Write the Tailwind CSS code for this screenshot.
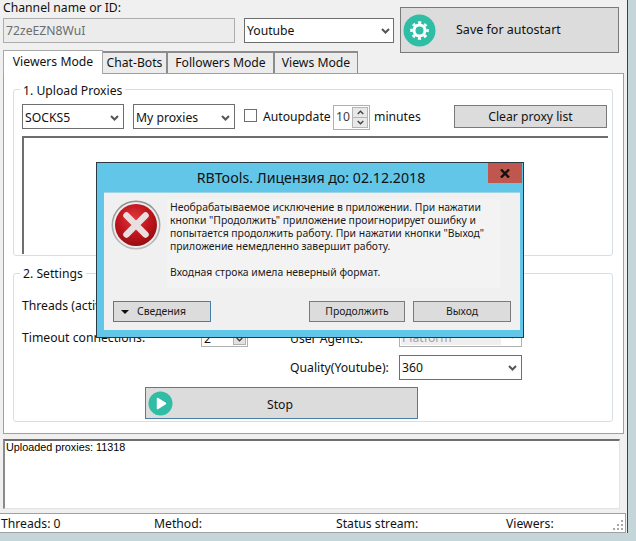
<!DOCTYPE html>
<html lang="en">
<head>
  <meta charset="UTF-8" />
  <title>RBTools</title>
  <script src="https://cdn.jsdelivr.net/npm/@tailwindcss/browser@4"></script>
</head>
<body class="relative w-[636px] h-[541px] overflow-hidden bg-[#c5d6db] font-['Noto_Sans',sans-serif] text-[12.2px] leading-[18px] text-[#111]">
  <!-- Main window -->
  <div class="w-[628px] h-[533px] bg-[#f0f0f0] border-r border-[#3c4347] flex flex-col">
    <!-- Header -->
    <div class="h-[73px] flex">
      <div class="w-[400px] pl-[3px] flex flex-col">
        <div class="h-[18px] leading-[15px] whitespace-nowrap">Channel name or ID:</div>
        <div class="flex gap-[9px]">
          <div class="w-[232px] h-[25px] border border-[#adadad] bg-[#ececec] text-[#6d6d6d] pl-[2px] pt-[1px] flex items-center">72zeEZN8WuI</div>
          <div class="w-[150px] h-[25px] border border-[#6e6e6e] bg-white pl-[2px] pt-[1px] flex items-center justify-between pr-[3px]">
            Youtube
            <svg width="9" height="6" viewBox="0 0 9 6" fill="none" stroke="#555" stroke-width="2"><path d="M1 1l3.5 3.5L8 1" /></svg>
          </div>
        </div>
        <!-- Tabs -->
        <div class="mt-auto flex items-end">
          <div class="w-[100px] h-[24px] bg-white border border-b-0 border-[#a8a8a8] text-center pt-[2px] relative z-10 -mb-px">Viewers Mode</div>
          <div class="w-[65px] h-[22px] bg-[#ececec] border-2 border-b-0 border-l-0 border-[#8c8c8c] text-center pt-[1px]">Chat-Bots</div>
          <div class="w-[107px] h-[22px] bg-[#ececec] border-2 border-b-0 border-l-0 border-[#8c8c8c] text-center pt-[1px]">Followers Mode</div>
          <div class="w-[83px] h-[22px] bg-[#ececec] border-t-2 border-r border-[#8c8c8c] text-center pt-[1px]">Views Mode</div>
        </div>
      </div>
      <div class="w-[219px] h-[46px] mt-[7px] bg-[#dcdcdc] border border-[#7a7a7a] flex items-center pl-[2px]">
        <svg width="33" height="33" viewBox="0 0 33 33">
          <circle cx="16.5" cy="16.5" r="16" fill="#2fbda5" />
          <circle cx="16.5" cy="16.5" r="5.5" fill="none" stroke="#fff" stroke-width="3" />
          <circle cx="16.5" cy="16.5" r="8" fill="none" stroke="#fff" stroke-width="2.6" stroke-dasharray="3.1 3.18" stroke-dashoffset="1.55" />
        </svg>
        <span class="ml-[20px] text-[12.5px]">Save for autostart</span>
      </div>
    </div>

    <!-- Tab panel -->
    <div class="ml-[3px] w-[621px] h-[361px] bg-white border border-[#a0a0a0] px-[9px] pt-[6px]">
      <fieldset class="w-[600px] h-[176px] border border-[#d5dfe5] rounded-[3px] pl-[8px]">
        <legend class="-ml-[2px] px-[3px] h-[18px] leading-[21px]">1. Upload Proxies</legend>
        <div class="flex items-start mt-[6px]">
          <div class="w-[102px] h-[25px] border border-[#6e6e6e] pl-[2px] pt-[2px] flex items-center justify-between pr-[4px]">
            SOCKS5
            <svg width="9" height="6" viewBox="0 0 9 6" fill="none" stroke="#555" stroke-width="2"><path d="M1 1l3.5 3.5L8 1" /></svg>
          </div>
          <div class="w-[102px] h-[25px] ml-[9px] border border-[#6e6e6e] pl-[2px] pt-[2px] flex items-center justify-between pr-[4px]">
            My proxies
            <svg width="9" height="6" viewBox="0 0 9 6" fill="none" stroke="#555" stroke-width="2"><path d="M1 1l3.5 3.5L8 1" /></svg>
          </div>
          <div class="w-[13px] h-[13px] ml-[9px] mt-[5px] border border-[#6e6e6e]"></div>
          <div class="ml-[6px] w-[70px] h-[25px] pt-[1px] flex items-center">Autoupdate</div>
          <div class="w-[37px] h-[25px] mt-[1px] border border-[#b0b0b0] flex">
            <div class="w-[19px] pl-[2px] pt-[2px] text-[#3d3a3a]">10</div>
            <div class="w-[16px] flex flex-col m-[1px] ml-0">
              <div class="flex-1 bg-[#e8e8e8] border border-[#b5b5b5] flex items-center justify-center"><svg width="7" height="5" viewBox="0 0 7 5" fill="none" stroke="#444" stroke-width="1.4"><path d="M.7 4l2.8-2.8L6.3 4" /></svg></div>
              <div class="flex-1 bg-[#e8e8e8] border border-t-0 border-[#b5b5b5] flex items-center justify-center"><svg width="7" height="5" viewBox="0 0 7 5" fill="none" stroke="#444" stroke-width="1.4"><path d="M.7 1l2.8 2.8L6.3 1" /></svg></div>
            </div>
          </div>
          <div class="ml-[4px] w-[80px] h-[25px] flex items-center">minutes</div>
          <div class="w-[153px] h-[23px] mt-[1px] bg-[#dcdcdc] border border-[#7a7a7a] pt-[1px] flex items-center justify-center">Clear proxy list</div>
        </div>
        <div class="mt-[6px] w-[586px] h-[118px] border-t-2 border-l-2 border-[#6e6e6e]"></div>
      </fieldset>

      <fieldset class="w-[600px] h-[158px] mt-[8px] border border-[#d5dfe5] rounded-[3px] pl-[8px]">
        <legend class="-ml-[2px] px-[3px] h-[18px] leading-[19px]">2. Settings</legend>
        <div class="mt-[15px] h-[18px]">Threads (active):</div>
        <div class="flex items-start mt-[9px]">
          <div class="w-[179px] mt-[5px]">Timeout connections:</div>
          <div class="w-[47px] h-[23px] border border-[#b0b0b0] pl-[2px] flex items-end justify-between pr-[1px] pb-[1px] leading-[12px]">
            2
            <div class="w-[13px] h-[11px] bg-[#e2e2e2] border border-[#b0b0b0] flex items-center justify-center"><svg width="7" height="5" viewBox="0 0 7 5" fill="none" stroke="#444" stroke-width="1.4"><path d="M.7 1l2.8 2.8L6.3 1" /></svg></div>
          </div>
          <div class="w-[109px] ml-[42px] mt-[6px]">User Agents:</div>
          <div class="w-[123px] h-[23px] border border-[#b0b0b0] p-[1px] pr-[4px] flex items-center justify-between text-[#a3a3a3]">
            <span class="w-[100px] h-full bg-[#efefef] pl-[1px] leading-[23px]">Platform</span>
            <svg width="9" height="6" viewBox="0 0 9 6" fill="none" stroke="#c4c4c4" stroke-width="2"><path d="M1 1l3.5 3.5L8 1" /></svg>
          </div>
        </div>
        <div class="flex items-center mt-[7px] ml-[268px]">
          <div class="w-[109px] pt-[1px]">Quality(Youtube):</div>
          <div class="w-[123px] h-[25px] border border-[#6e6e6e] pl-[2px] pr-[4px] pt-[1px] flex items-center justify-between">
            360
            <svg width="9" height="6" viewBox="0 0 9 6" fill="none" stroke="#555" stroke-width="2"><path d="M1 1l3.5 3.5L8 1" /></svg>
          </div>
        </div>
        <div class="ml-[123px] mt-[7px] w-[273px] h-[32px] bg-[#dcdcdc] border border-[#4a7ea8] flex items-center pl-[2px]">
          <svg width="25" height="25" viewBox="0 0 25 25">
            <circle cx="12.5" cy="12.5" r="12" fill="#2fbda5" />
            <path d="M9.5 7.5l8 5-8 5z" fill="#fff" stroke="#fff" stroke-width="1.5" stroke-linejoin="round" />
          </svg>
          <span class="ml-[94px] pt-[3px]">Stop</span>
        </div>
      </fieldset>
    </div>

    <!-- Log -->
    <div class="ml-[3px] mt-[5px] w-[617px] h-[70px] bg-white border-t-2 border-l-2 border-r border-b border-t-[#6e6e6e] border-l-[#8a8a8a] border-r-[#e3e3e3] border-b-[#e3e3e3] pl-[1px] font-['Liberation_Sans',sans-serif] text-[10.8px] leading-[13px] text-black">Uploaded proxies: 11318</div>

    <!-- Status bar -->
    <div class="relative mt-[4px] w-[626px] h-[20px] bg-white border border-l-0 border-[#a0a0a0] pt-[2px] flex items-center">
      <span class="w-[154px] pl-[1px]">Threads: 0</span>
      <span class="w-[182px]">Method:</span>
      <span class="w-[170px]">Status stream:</span>
      <span>Viewers:</span>
      <svg class="absolute right-0 bottom-0" width="12" height="12" viewBox="0 0 12 12" fill="#a9a9a9">
        <rect x="8" y="0" width="2" height="2" /><rect x="4" y="4" width="2" height="2" /><rect x="8" y="4" width="2" height="2" /><rect x="0" y="8" width="2" height="2" /><rect x="4" y="8" width="2" height="2" /><rect x="8" y="8" width="2" height="2" />
      </svg>
    </div>
  </div>

  <!-- Error dialog -->
  <div class="absolute left-[96px] top-[162px] w-[428px] h-[176px] bg-[#62c6e9] border border-[#2b3a42] flex flex-col">
    <div class="relative h-[29px] flex items-center justify-center pl-[2px] text-[14.2px] leading-[20px] pt-[1px]">
      RBTools. Лицензия до: 02.12.2018
      <div class="absolute right-[1px] top-0 w-[34px] h-[20px] bg-[#c0574e] flex items-center justify-center">
        <svg width="10" height="9" viewBox="0 0 10 9" fill="none" stroke="#111" stroke-width="2.4"><path d="M1 .5l8 8M9 .5l-8 8" /></svg>
      </div>
    </div>
    <div class="mx-[7px] w-[416px] h-[138px] bg-[#f0f0f0] border-t border-[#9fd4e6] flex flex-col">
      <div class="flex h-[89px] mt-[6px]">
        <svg class="ml-[7px] mt-[1px]" width="50" height="50" viewBox="0 0 50 50">
          <defs>
            <radialGradient id="red" cx="45%" cy="35%" r="70%">
              <stop offset="0%" stop-color="#e0383f" />
              <stop offset="55%" stop-color="#c0141c" />
              <stop offset="100%" stop-color="#8e0c12" />
            </radialGradient>
            <linearGradient id="ring" x1="0" y1="0" x2="0" y2="1">
              <stop offset="0%" stop-color="#8f8f8f" />
              <stop offset="100%" stop-color="#bdbdbd" />
            </linearGradient>
          </defs>
          <circle cx="25" cy="25" r="24.5" fill="url(#ring)" />
          <circle cx="25" cy="25" r="23" fill="#ececec" />
          <circle cx="25" cy="25" r="21" fill="url(#red)" />
          <path d="M15.5 15.5l19 19M34.5 15.5l-19 19" stroke="#eadfdf" stroke-width="6.5" stroke-linecap="round" />
        </svg>
        <div class="ml-[6px] w-[333px] bg-[#f3f3f3] pl-[3px] pt-[2px] text-[10.4px] leading-[13px] text-[#1a1a1a] whitespace-nowrap">
          <p>Необрабатываемое исключение в приложении. При нажатии</p>
          <p>кнопки "Продолжить" приложение проигнорирует ошибку и</p>
          <p>попытается продолжить работу. При нажатии кнопки "Выход"</p>
          <p>приложение немедленно завершит работу.</p>
          <p class="mt-[13px]">Входная строка имела неверный формат.</p>
        </div>
      </div>
      <div class="flex mt-[13px] text-[10.4px] leading-[15px] text-[#1a1a1a] pl-[9px]">
        <div class="w-[98px] h-[21px] bg-[#dcdcdc] border border-[#4a7ea8] flex items-center pl-[7px]">
          <svg width="8" height="4" viewBox="0 0 8 4" fill="#111"><path d="M0 0h8L4 4z" /></svg>
          <span class="ml-[8px]">Сведения</span>
        </div>
        <div class="w-[96px] h-[21px] ml-[98px] bg-[#dcdcdc] border border-[#7a7a7a] flex items-center justify-center">Продолжить</div>
        <div class="w-[98px] h-[21px] ml-[8px] bg-[#dcdcdc] border border-[#7a7a7a] flex items-center justify-center">Выход</div>
      </div>
    </div>
  </div>
</body>
</html>
